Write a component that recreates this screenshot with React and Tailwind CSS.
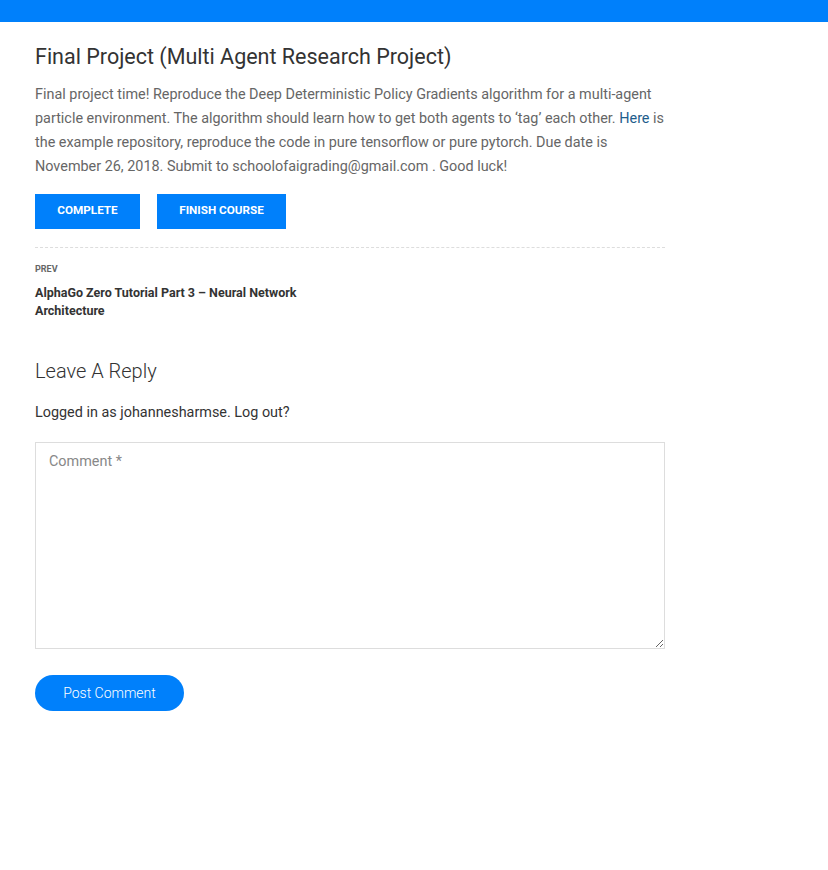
export default function App() {
  return (
    <div className="min-h-[870px] bg-white font-['Roboto',sans-serif]">
      <div className="h-[22px] bg-[#0080fb]" />
      <div className="w-[630px] ml-[35px]">
        <h1 className="mt-[19px] text-[21.5px] leading-[32px] text-[#333]">
          Final Project (Multi Agent Research Project)
        </h1>
        <p className="mt-[10px] text-[14.4px] leading-[24px] text-[#666]">
          Final project time! Reproduce the Deep Deterministic Policy Gradients algorithm for a multi-agent
          particle environment. The algorithm should learn how to get both agents to ‘tag’ each other.{" "}
          <a href="#" className="text-[#1e5d8c]">Here</a> is the example repository, reproduce the code in pure
          tensorflow or pure pytorch. Due date is November 26, 2018. Submit to schoolofaigrading@gmail.com . Good
          luck!
        </p>
        <div className="mt-[15px] flex gap-[17px]">
          <button className="h-[35px] w-[105px] bg-[#0080fb] pb-[1px] text-[11.7px] font-bold uppercase text-white">
            Complete
          </button>
          <button className="h-[35px] w-[129px] bg-[#0080fb] pb-[1px] text-[11.7px] font-bold uppercase text-white">
            Finish Course
          </button>
        </div>
        <div className="mt-[18px] border-t border-dashed border-[#ddd]" />
        <div className="mt-[15px] w-[300px]">
          <div className="text-[9px] font-bold uppercase leading-[12px] text-[#666]">Prev</div>
          <div className="mt-[9px] text-[12.5px] font-bold leading-[18px] text-[#333]">
            AlphaGo Zero Tutorial Part 3 – Neural Network Architecture
          </div>
        </div>
        <h3 className="mt-[37px] text-[20px] font-light leading-[28px] text-[#333]">Leave A Reply</h3>
        <p className="mt-[16px] text-[14.4px] leading-[24px] text-[#333]">
          Logged in as johannesharmse. Log out?
        </p>
        <textarea
          placeholder="Comment *"
          className="mt-[17px] block h-[207px] w-full border border-[#ddd] px-[13px] py-[8px] text-[14.4px] leading-[22px] text-[#333] placeholder:text-[#888] outline-none"
        />
        <button className="mt-[26px] h-[36px] w-[149px] rounded-full bg-[#0080fb] text-[14px] font-light text-white">
          Post Comment
        </button>
      </div>
    </div>
  );
}
